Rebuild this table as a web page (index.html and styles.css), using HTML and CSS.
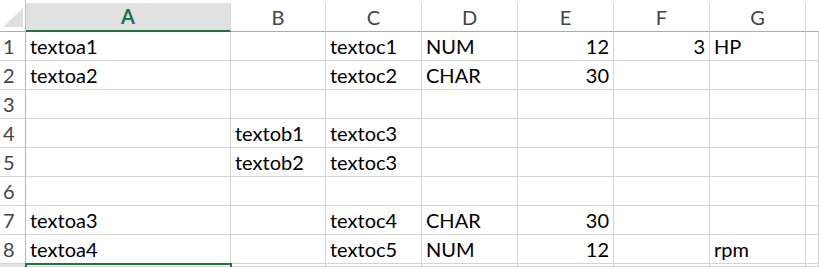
FILE: index.html
```html
<!DOCTYPE html>
<html>
<head>
<meta charset="utf-8">
<link rel="stylesheet" href="styles.css">
</head>
<body>
<div class="sheet">
  <div class="corner"><svg width="25" height="31" viewBox="0 0 25 31"><polygon points="3,27 23,27 23,8" fill="#dfdfdf"/></svg></div>
  <div class="ch sel">A</div>
  <div class="ch">B</div>
  <div class="ch">C</div>
  <div class="ch">D</div>
  <div class="ch">E</div>
  <div class="ch">F</div>
  <div class="ch">G</div>
  <div class="ch last"></div>

  <div class="rh">1</div><div class="c">textoa1</div><div class="c"></div><div class="c">textoc1</div><div class="c">NUM</div><div class="c n">12</div><div class="c n">3</div><div class="c">HP</div><div class="c"></div>
  <div class="rh">2</div><div class="c">textoa2</div><div class="c"></div><div class="c">textoc2</div><div class="c">CHAR</div><div class="c n">30</div><div class="c n"></div><div class="c"></div><div class="c"></div>
  <div class="rh">3</div><div class="c"></div><div class="c"></div><div class="c"></div><div class="c"></div><div class="c"></div><div class="c"></div><div class="c"></div><div class="c"></div>
  <div class="rh">4</div><div class="c"></div><div class="c">textob1</div><div class="c">textoc3</div><div class="c"></div><div class="c"></div><div class="c"></div><div class="c"></div><div class="c"></div>
  <div class="rh">5</div><div class="c"></div><div class="c">textob2</div><div class="c">textoc3</div><div class="c"></div><div class="c"></div><div class="c"></div><div class="c"></div><div class="c"></div>
  <div class="rh">6</div><div class="c"></div><div class="c"></div><div class="c"></div><div class="c"></div><div class="c"></div><div class="c"></div><div class="c"></div><div class="c"></div>
  <div class="rh">7</div><div class="c">textoa3</div><div class="c"></div><div class="c">textoc4</div><div class="c">CHAR</div><div class="c n">30</div><div class="c"></div><div class="c"></div><div class="c"></div>
  <div class="rh">8</div><div class="c">textoa4</div><div class="c"></div><div class="c">textoc5</div><div class="c">NUM</div><div class="c n">12</div><div class="c"></div><div class="c">rpm</div><div class="c"></div>
  <div class="rh rsel"></div><div class="c active"></div><div class="c"></div><div class="c"></div><div class="c"></div><div class="c"></div><div class="c"></div><div class="c"></div><div class="c"></div>
</div>
</body>
</html>
```
FILE: styles.css
```css
html, body {
  margin: 0;
  padding: 0;
  background: #ffffff;
  overflow: hidden;
}
body {
  width: 819px;
  height: 267px;
  font-family: Lato, "Liberation Sans", sans-serif;
}
.sheet {
  display: grid;
  grid-template-columns: 26px 205px 95px 96px 96px 96px 96px 96px 1fr;
  grid-template-rows: 32px repeat(8, 29px) 3px;
  height: 267px;
  overflow: hidden;
}
.corner {
  box-sizing: border-box;
  border-right: 1px solid #c0c0c0;
  border-bottom: 1px solid #ababab;
  height: 32px;
}
.corner svg {
  display: block;
}
.ch {
  box-sizing: border-box;
  margin-top: 3px;
  height: 29px;
  border-right: 1px solid #dadada;
  border-bottom: 1px solid #ababab;
  text-align: center;
  font-size: 20px;
  line-height: 28px;
  color: #444444;
}
.ch.sel {
  background: #e1e1e1;
  color: #217346;
  font-weight: bold;
  border-bottom: 2px solid #217346;
  line-height: 27px;
}
.ch.last {
  border-right: none;
}
.rh {
  box-sizing: border-box;
  border-right: 1px solid #b5b5b5;
  border-bottom: 1px solid #d4d4d4;
  font-size: 20px;
  line-height: 28px;
  padding-left: 3px;
  color: #444444;
}
.rh.rsel {
  background: #e1e1e1;
  border-bottom: none;
}
.c {
  box-sizing: border-box;
  border-right: 1px solid #d4d4d4;
  border-bottom: 1px solid #d4d4d4;
  font-size: 20px;
  line-height: 28px;
  padding: 0 4px 0 4px;
  color: #000000;
  white-space: nowrap;
}
.c.n {
  text-align: right;
}
.c.active {
  position: relative;
  overflow: visible;
}
.c.active::after {
  content: "";
  position: absolute;
  left: -1px;
  top: -1px;
  right: -2px;
  height: 20px;
  border: 2px solid #217346;
}
```
